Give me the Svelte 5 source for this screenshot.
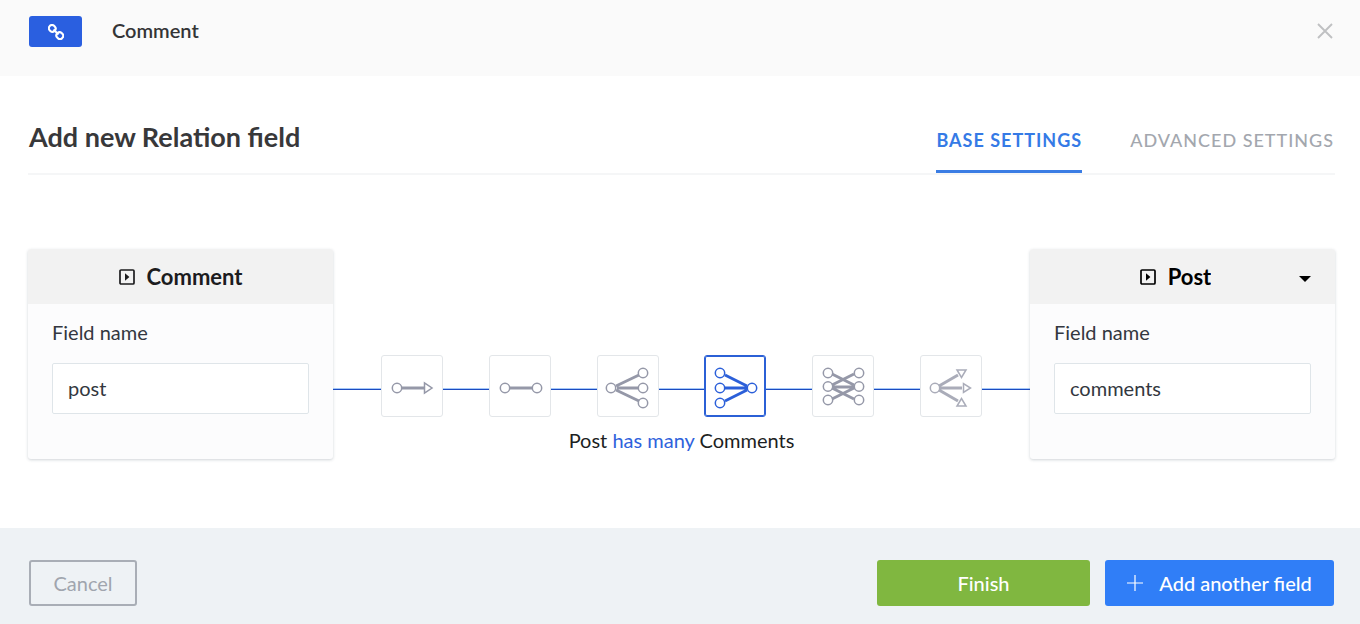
<script>
  const relations = [
    { id: 'oneWay', label: 'has one' },
    { id: 'oneToOne', label: 'has and belongs to one' },
    { id: 'oneToMany', label: 'belongs to many' },
    { id: 'manyToOne', label: 'has many' },
    { id: 'manyToMany', label: 'has and belongs to many' },
    { id: 'manyWay', label: 'has many (one way)' }
  ];

  let selected = $state('manyToOne');
  let sourceField = $state('post');
  let targetField = $state('comments');
  let target = $state('Post');
</script>

{#snippet contentIcon()}
  <svg viewBox="0 0 16 16" width="16" height="18" aria-hidden="true">
    <rect x="1" y="1" width="14" height="14" rx="1" fill="none" stroke="currentColor" stroke-width="1.7" />
    <path d="M6 4.200v7.600l4.400-3.800z" fill="currentColor" />
  </svg>
{/snippet}

{#snippet relationIcon(id)}
  <svg viewBox="0 0 60 60" width="60" height="60" fill="none" stroke="currentColor" stroke-width="1.5" aria-hidden="true">
    {#if id === 'oneWay'}
      <path class="link" d="M20 32h22" />
      <circle cx="15" cy="32" r="4.7" />
      <path d="M42.500 27v10l7.500-5z" />
    {:else if id === 'oneToOne'}
      <path class="link" d="M20 32h22" />
      <circle cx="15" cy="32" r="4.7" />
      <circle cx="47" cy="32" r="4.7" />
    {:else if id === 'oneToMany'}
      <path class="link" d="M18 30L41 19M19 32h22M18 34l23 11" />
      <circle cx="13" cy="32" r="4.700" />
      <circle cx="45" cy="17" r="4.700" />
      <circle cx="45" cy="32" r="4.700" />
      <circle cx="45" cy="47" r="4.700" />
    {:else if id === 'manyToOne'}
      <path class="link" d="M42 30L20 19M42 32H20M42 34L20 45" />
      <circle cx="15" cy="17" r="4.700" />
      <circle cx="15" cy="32" r="4.700" />
      <circle cx="15" cy="47" r="4.700" />
      <circle cx="47" cy="32" r="4.700" />
    {:else if id === 'manyToMany'}
      <path class="link" d="M19 18l22 11M19 29l22-11M19 31h22M19 32l22 11M19 43l22-11" />
      <circle cx="15" cy="17" r="4.700" />
      <circle cx="15" cy="30.500" r="4.700" />
      <circle cx="15" cy="44" r="4.700" />
      <circle cx="46" cy="17" r="4.700" />
      <circle cx="46" cy="30.500" r="4.700" />
      <circle cx="46" cy="44" r="4.700" />
    {:else}
      <g opacity="0.8">
        <path class="link" d="M18 30l19-11M19 32h22M18 34l19 11" />
        <circle cx="14" cy="32" r="4.700" />
        <path d="M36 14h9l-4.500 7.500zM42.500 27.500v9l7-4.500zM36 50h9l-4.500-7.500z" />
      </g>
    {/if}
  </svg>
{/snippet}

<div class="dialog">
  <header class="top">
    <span class="badge">
      <svg viewBox="0 0 16 16" width="16" height="16" fill="none" stroke="#fff" stroke-width="2.100" aria-hidden="true">
        <rect x="0.800" y="1.300" width="6.800" height="6.200" rx="2.900" transform="rotate(45 4.200 4.400)" />
        <rect x="8.400" y="8.500" width="6.800" height="6.200" rx="2.900" transform="rotate(45 11.800 11.600)" />
        <path d="M5.500 5.500l5 5" />
      </svg>
    </span>
    <span class="crumb">Comment</span>
    <button class="close" aria-label="Close">
      <svg viewBox="0 0 16 16" width="16" height="16" stroke="#bfc0c2" stroke-width="1.9" aria-hidden="true">
        <path d="M1 1l14 14M15 1L1 15" />
      </svg>
    </button>
  </header>

  <main>
    <div class="heading">
      <h1>Add new Relation field</h1>
      <nav>
        <a class="active" href="#base">BASE SETTINGS</a>
        <a href="#advanced">ADVANCED SETTINGS</a>
      </nav>
    </div>

    <div class="relation">
      <section class="card">
        <div class="card-head">
          {@render contentIcon()}
          <span>Comment</span>
        </div>
        <div class="card-body">
          <label for="source-field">Field name</label>
          <input id="source-field" type="text" bind:value={sourceField} />
        </div>
      </section>

      <div class="middle">
        <div class="track">
          <span class="line"></span>
          {#each relations as r (r.id)}
            <button
              class="tile"
              class:selected={selected === r.id}
              aria-label={r.label}
              aria-pressed={selected === r.id}
              onclick={() => (selected = r.id)}
            >
              {@render relationIcon(r.id)}
            </button>
            <span class="line"></span>
          {/each}
        </div>
        <p class="caption">
          {target} <span>{relations.find((r) => r.id === selected).label}</span> Comments
        </p>
      </div>

      <section class="card">
        <div class="card-head target">
          {@render contentIcon()}
          <select bind:value={target} aria-label="Target content type">
            <option>Post</option>
          </select>
          <svg class="caret" viewBox="0 0 12 6" width="12" height="6" aria-hidden="true">
            <path d="M0 0h12L6 6z" fill="#000" />
          </svg>
        </div>
        <div class="card-body">
          <label for="target-field">Field name</label>
          <input id="target-field" type="text" bind:value={targetField} />
        </div>
      </section>
    </div>
  </main>

  <footer>
    <button class="btn cancel">Cancel</button>
    <button class="btn finish">Finish</button>
    <button class="btn add">
      <svg viewBox="0 0 16 16" width="16" height="16" stroke="#fff" stroke-width="1.2" aria-hidden="true">
        <path d="M8 0v16M0 8h16" />
      </svg>
      Add another field
    </button>
  </footer>
</div>

<style>
  :global(body) {
    margin: 0;
    background: #fff;
  }
  .dialog,
  .dialog :is(button, input, select) {
    font-family: Lato, 'Open Sans', sans-serif;
    font-size: 20px;
  }
  .dialog * {
    box-sizing: border-box;
  }
  .dialog {
    display: flex;
    flex-direction: column;
    min-height: 100vh;
    line-height: 24px;
    color: #333740;
  }
  button {
    padding: 0;
    cursor: pointer;
  }
  svg {
    flex: none;
    display: block;
  }
  .top {
    display: flex;
    align-items: flex-start;
    height: 76px;
    padding: 16px 26px 0 29px;
    background: #fafafa;
  }
  .badge {
    display: grid;
    place-items: center;
    width: 53px;
    height: 31px;
    border-radius: 3px;
    background: #2a5fe0;
  }
  .crumb {
    margin-left: 30px;
    line-height: 28px;
    font-weight: 600;
    color: #343436;
  }
  .close {
    display: grid;
    place-items: center;
    width: 18px;
    height: 30px;
    margin-left: auto;
    border: 0;
    background: none;
  }
  main {
    flex: 1;
    padding: 44px 25px 68px 28px;
  }
  .heading {
    display: flex;
    justify-content: space-between;
    border-bottom: 2px solid #f5f6f7;
  }
  h1 {
    margin: 0;
    padding-left: 1px;
    line-height: 34px;
    font-size: 27px;
    font-weight: 700;
    color: #38383a;
  }
  nav {
    display: flex;
    gap: 48px;
    padding-right: 1px;
  }
  nav a {
    height: 53px;
    padding-top: 8px;
    border-bottom: 3px solid transparent;
    font-size: 18px;
    font-weight: 500;
    letter-spacing: 1px;
    color: #a3a7ae;
    text-decoration: none;
  }
  nav .active {
    font-weight: 700;
    color: #357ae6;
    border-color: #3b7de4;
  }
  .relation {
    display: flex;
    align-items: flex-start;
    padding-top: 74px;
  }
  .card {
    flex: none;
    width: 305px;
    border-radius: 3px;
    overflow: hidden;
    background: #fcfcfd;
    box-shadow: 0 1px 3px rgba(60, 75, 90, 0.24);
  }
  .card-head {
    display: flex;
    align-items: center;
    justify-content: center;
    gap: 12px;
    height: 55px;
    background: #f2f2f2;
    font-size: 22px;
    font-weight: 700;
    color: #1c1c1e;
  }
  .target {
    position: relative;
    padding-right: 14px;
    color: #000;
  }
  .target select {
    field-sizing: content;
    appearance: none;
    padding: 0;
    border: 0;
    background: none;
    font-size: 22px;
    font-weight: 700;
    color: #000;
    cursor: pointer;
  }
  .caret {
    position: absolute;
    right: 24px;
    top: 27px;
    pointer-events: none;
  }
  .card-body {
    height: 155px;
    padding: 16px 24px;
  }
  label {
    display: block;
    margin-bottom: 19px;
    color: #333740;
  }
  input {
    display: block;
    width: 100%;
    height: 51px;
    padding: 0 15px 2px;
    border: 1px solid #dfe5e9;
    border-radius: 2px;
    background: #fff;
    color: #333740;
  }
  .middle {
    flex: 1;
    min-width: 0;
    padding-top: 106px;
  }
  .track {
    display: flex;
    align-items: flex-start;
  }
  .line {
    flex: 46;
    height: 2px;
    margin-top: 33px;
    background: linear-gradient(#a4c8f8 50%, #1c4bc0 50%);
  }
  .line:first-child,
  .line:last-child {
    flex-grow: 48;
  }
  .tile {
    flex: none;
    width: 62px;
    height: 62px;
    border: 1px solid #e3e6e9;
    border-radius: 3px;
    background: #fff;
    color: #9598a8;
  }
  .tile :global(.link) {
    stroke-width: 3;
  }
  .tile.selected {
    border-color: #2b60d6;
    box-shadow: inset 0 0 0 1px #2b60d6;
    color: #2b5fd9;
  }
  .caption {
    margin: 11px 0 0;
    text-align: center;
    color: #1d1f23;
  }
  .caption span {
    color: #2f62dc;
  }
  footer {
    display: flex;
    align-items: flex-start;
    gap: 15px;
    height: 96px;
    padding: 32px 26px 0 29px;
    background: #eef2f5;
  }
  .btn {
    height: 46px;
    border: 0;
    border-radius: 3px;
    color: #fff;
  }
  .cancel {
    width: 108px;
    margin-right: auto;
    border: 2px solid #a9aeb6;
    background: none;
    color: #a0a5ae;
  }
  .finish {
    width: 213px;
    background: #80b740;
    font-weight: 500;
  }
  .add {
    display: flex;
    align-items: center;
    justify-content: center;
    gap: 16px;
    width: 229px;
    background: #307ef7;
    font-weight: 500;
  }
</style>
